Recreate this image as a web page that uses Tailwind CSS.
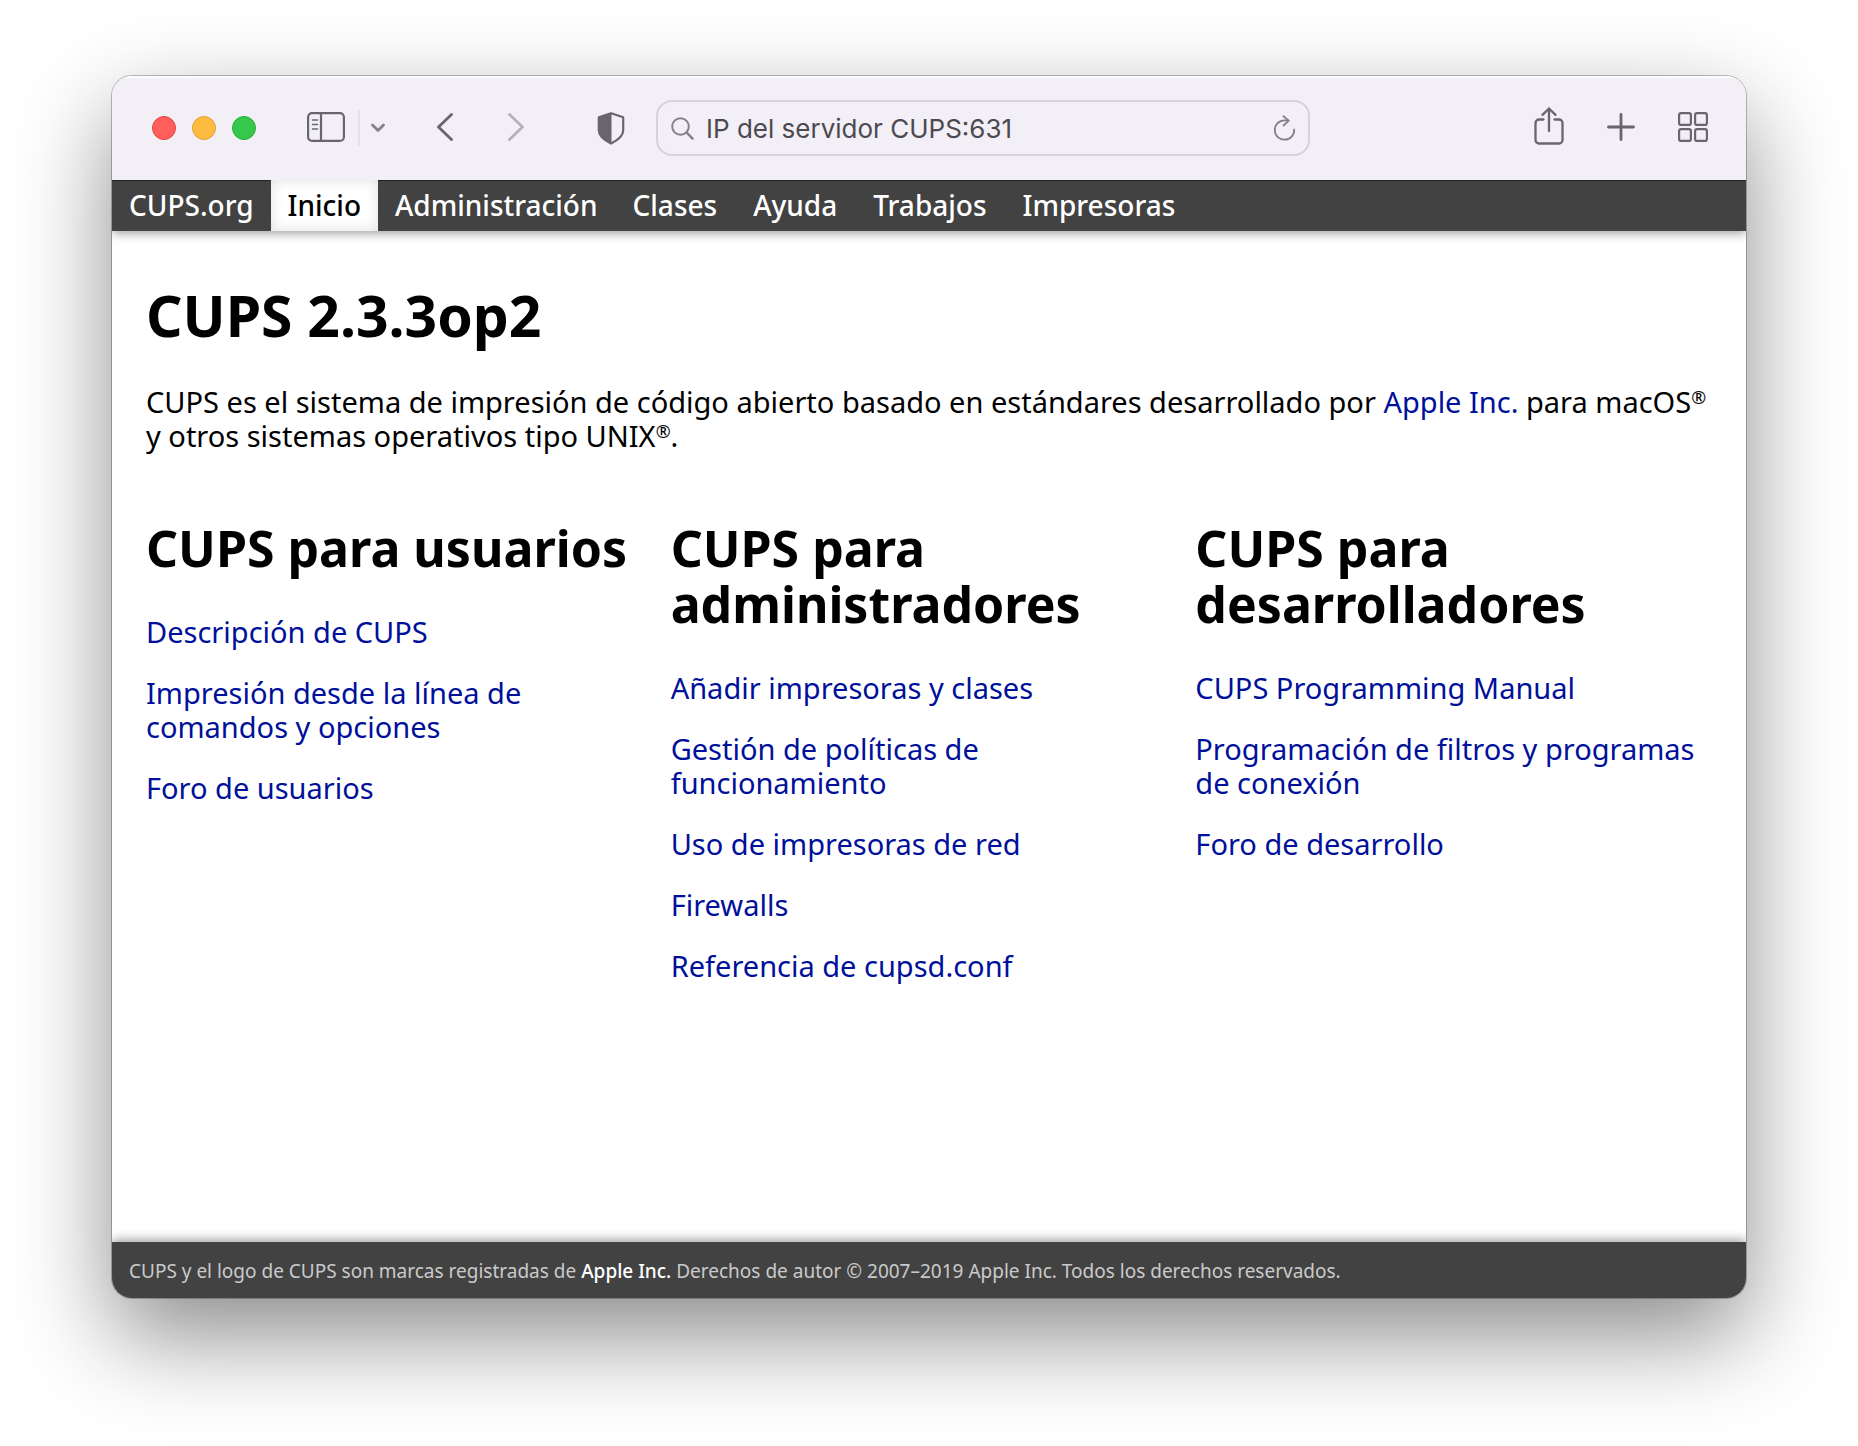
<!DOCTYPE html>
<html lang="es">
<head>
<meta charset="utf-8">
<title>Inicio - CUPS 2.3.3op2</title>
<script src="https://cdn.jsdelivr.net/npm/@tailwindcss/browser@4"></script>
</head>
<body class="flex min-h-screen flex-col bg-white px-28 pt-[76px] pb-[148px] font-['Noto_Sans',sans-serif] text-[29px] leading-[34px] text-black">
<div class="flex flex-1 flex-col overflow-hidden rounded-[20px] bg-white shadow-[0_0_0_1px_rgba(0,0,0,0.25),0_38px_96px_rgba(0,0,0,0.46)]">

  <header class="z-20 flex h-[104px] shrink-0 items-center bg-[#f2eff7] pr-[38px] pl-10 text-[#68656d] shadow-[inset_0_2px_1px_rgba(255,255,255,0.8)]">
    <div class="flex gap-4">
      <button aria-label="Cerrar" class="size-6 rounded-full border border-[#e2463f] bg-[#fe5f5b]"></button>
      <button aria-label="Minimizar" class="size-6 rounded-full border border-[#dfa033] bg-[#febb40]"></button>
      <button aria-label="Maximizar" class="size-6 rounded-full border border-[#27ab35] bg-[#35c84a]"></button>
    </div>
    <button aria-label="Barra lateral" class="ml-[51px]">
      <svg class="mb-0.5 h-[30px] w-[38px]" viewBox="0 0 38 30" fill="none" stroke="currentColor" stroke-width="2.2"><rect x="1.1" y="1.1" width="35.8" height="27.8" rx="4"/><path d="M14 1v28"/><path d="M5.5 8h5M5.5 12.5h5M5.5 17h5" stroke-width="1.6" stroke-linecap="round"/></svg>
    </button>
    <div class="ml-[13px] h-9 w-0.5 bg-[#e3e0e8]"></div>
    <button aria-label="Grupos de pestañas" class="ml-2.5">
      <svg class="h-3 w-4" viewBox="0 0 16 12" fill="none" stroke="#85828b" stroke-width="2.8" stroke-linecap="round" stroke-linejoin="round"><path d="M2.5 3l5.5 5.5L13.5 3"/></svg>
    </button>
    <button aria-label="Atrás" class="ml-[51px]">
      <svg class="mb-0.5 h-7 w-4" viewBox="0 0 16 28" fill="none" stroke="currentColor" stroke-width="2.8" stroke-linecap="round" stroke-linejoin="round"><path d="M14.5 1.5L1.5 14l13 12.5"/></svg>
    </button>
    <button aria-label="Adelante" class="ml-[55px]">
      <svg class="mb-0.5 h-7 w-4" viewBox="0 0 16 28" fill="none" stroke="#b5b2ba" stroke-width="2.8" stroke-linecap="round" stroke-linejoin="round"><path d="M1.5 1.5L14.5 14l-13 12.5"/></svg>
    </button>
    <button aria-label="Informe de privacidad" class="ml-[73px]">
      <svg class="h-[33px] w-7" viewBox="0 0 28 33"><path d="M14 1.2L26.2 5.2V18.5C26.2 24 20 28.5 14 31.6C8 28.5 1.8 24 1.8 18.5V5.2Z" fill="none" stroke="currentColor" stroke-width="2.2" stroke-linejoin="round"/><path d="M14.5 1L1.8 5.2V18.5C1.8 24 8 28.5 14.5 31.6Z" fill="currentColor"/></svg>
    </button>
    <label class="ml-[31px] flex h-14 w-[654px] items-center rounded-2xl border-2 border-[#d5d2d9] pr-3 pl-[13px] font-[Inter,sans-serif] text-[26px] text-[#4c4a4e]">
      <svg class="mr-3 size-[23px] shrink-0" viewBox="0 0 23 23" fill="none" stroke="#838086" stroke-width="2" stroke-linecap="round"><circle cx="9.5" cy="9.5" r="8.3"/><path d="M15.7 15.7L21.6 21.6" stroke-width="2.4"/></svg>
      <input aria-label="Dirección" value="IP del servidor CUPS:631" class="min-w-0 flex-1 bg-transparent pt-0.5 outline-none">
      <button aria-label="Recargar">
        <svg class="h-[26px] w-6" viewBox="0 0 24 26" fill="none" stroke="#838086" stroke-width="1.8" stroke-linecap="round" stroke-linejoin="round"><path d="M22.2 14.5A9.7 9.7 0 1 1 12.5 5.300H16.5"/><path d="M11.5 1.2L16.7 5.6L11.5 10.5"/></svg>
      </button>
    </label>
    <div class="ml-auto flex items-center gap-[43px]">
      <button aria-label="Compartir">
        <svg class="mb-1 h-[38px] w-[30px]" viewBox="0 0 30 38" fill="none" stroke="currentColor" stroke-width="2.3" stroke-linecap="round" stroke-linejoin="round"><path d="M9.5 12.5H5A3.5 3.5 0 0 0 1.5 16V33A3.5 3.5 0 0 0 5 36.5H25A3.5 3.5 0 0 0 28.5 33V16A3.5 3.5 0 0 0 25 12.5H20.5"/><path d="M15 24V1.5M8.5 7.8L15 1.5L21.5 7.8"/></svg>
      </button>
      <button aria-label="Pestaña nueva">
        <svg class="mb-0.5 size-7" viewBox="0 0 28 28" fill="none" stroke="currentColor" stroke-width="2.8" stroke-linecap="round"><path d="M14 1.5V26.5M1.5 14H26.5"/></svg>
      </button>
      <button aria-label="Vista general de pestañas">
        <svg class="mb-0.5 size-[30px]" viewBox="0 0 30 30" fill="none" stroke="currentColor" stroke-width="2.2"><rect x="1.1" y="1.1" width="11.8" height="11.8" rx="2"/><rect x="17.1" y="1.1" width="11.8" height="11.8" rx="2"/><rect x="1.1" y="17.1" width="11.8" height="11.8" rx="2"/><rect x="17.1" y="17.1" width="11.8" height="11.8" rx="2"/></svg>
      </button>
    </div>
  </header>

  <nav class="z-10 flex h-[51px] shrink-0 items-stretch bg-[#424242] text-[28px] leading-[50px] font-medium text-white shadow-[0_2px_10px_rgba(0,0,0,0.4),inset_0_1px_0_#222]">
    <a href="#" class="px-[17px]">CUPS.org</a>
    <a href="#" class="bg-white px-[17px] text-black shadow-[inset_0_0_14px_rgba(0,0,0,0.12)]">Inicio</a>
    <a href="#" class="px-[17px]">Administración</a>
    <a href="#" class="px-[18px]">Clases</a>
    <a href="#" class="px-[18px]">Ayuda</a>
    <a href="#" class="px-[18px]">Trabajos</a>
    <a href="#" class="px-[18px]">Impresoras</a>
  </nav>

  <main class="flex-1 pt-[52px] pr-[26px] pl-[34px]">
    <h1 class="text-[57px] leading-[64px] font-bold">CUPS 2.3.3op2</h1>
    <p class="mt-[38px] pr-2">CUPS es el sistema de impresión de código abierto basado en estándares desarrollado por <a href="#" class="text-[#00109a]">Apple Inc.</a> para macOS<sup class="text-[18px] leading-none">®</sup> y otros sistemas operativos tipo UNIX<sup class="text-[18px] leading-none">®</sup>.</p>
    <div class="mt-[67px] grid grid-cols-3 text-[#00109a]">
      <section class="flex flex-col items-start gap-[27px] pr-5">
        <h2 class="mb-3 text-[50px] leading-[56px] font-bold text-black">CUPS para usuarios</h2>
        <a href="#">Descripción de CUPS</a>
        <a href="#">Impresión desde la línea de comandos y opciones</a>
        <a href="#">Foro de usuarios</a>
      </section>
      <section class="flex flex-col items-start gap-[27px] pr-5">
        <h2 class="mb-3 text-[50px] leading-[56px] font-bold text-black">CUPS para administradores</h2>
        <a href="#">Añadir impresoras y clases</a>
        <a href="#">Gestión de políticas de funcionamiento</a>
        <a href="#">Uso de impresoras de red</a>
        <a href="#">Firewalls</a>
        <a href="#">Referencia de cupsd.conf</a>
      </section>
      <section class="flex flex-col items-start gap-[27px] pr-5">
        <h2 class="mb-3 text-[50px] leading-[56px] font-bold text-black">CUPS para desarrolladores</h2>
        <a href="#">CUPS Programming Manual</a>
        <a href="#">Programación de filtros y programas de conexión</a>
        <a href="#">Foro de desarrollo</a>
      </section>
    </div>
  </main>

  <footer class="flex h-14 shrink-0 items-center bg-[#424242] px-[17px] pt-0.5 text-[19px] text-[#cacaca] shadow-[0_-2px_10px_rgba(0,0,0,0.4)]">
    <p>CUPS y el logo de CUPS son marcas registradas de <a href="#" class="font-medium text-white">Apple Inc.</a> Derechos de autor © 2007–2019 Apple Inc. Todos los derechos reservados.</p>
  </footer>
</div>
</body>
</html>
